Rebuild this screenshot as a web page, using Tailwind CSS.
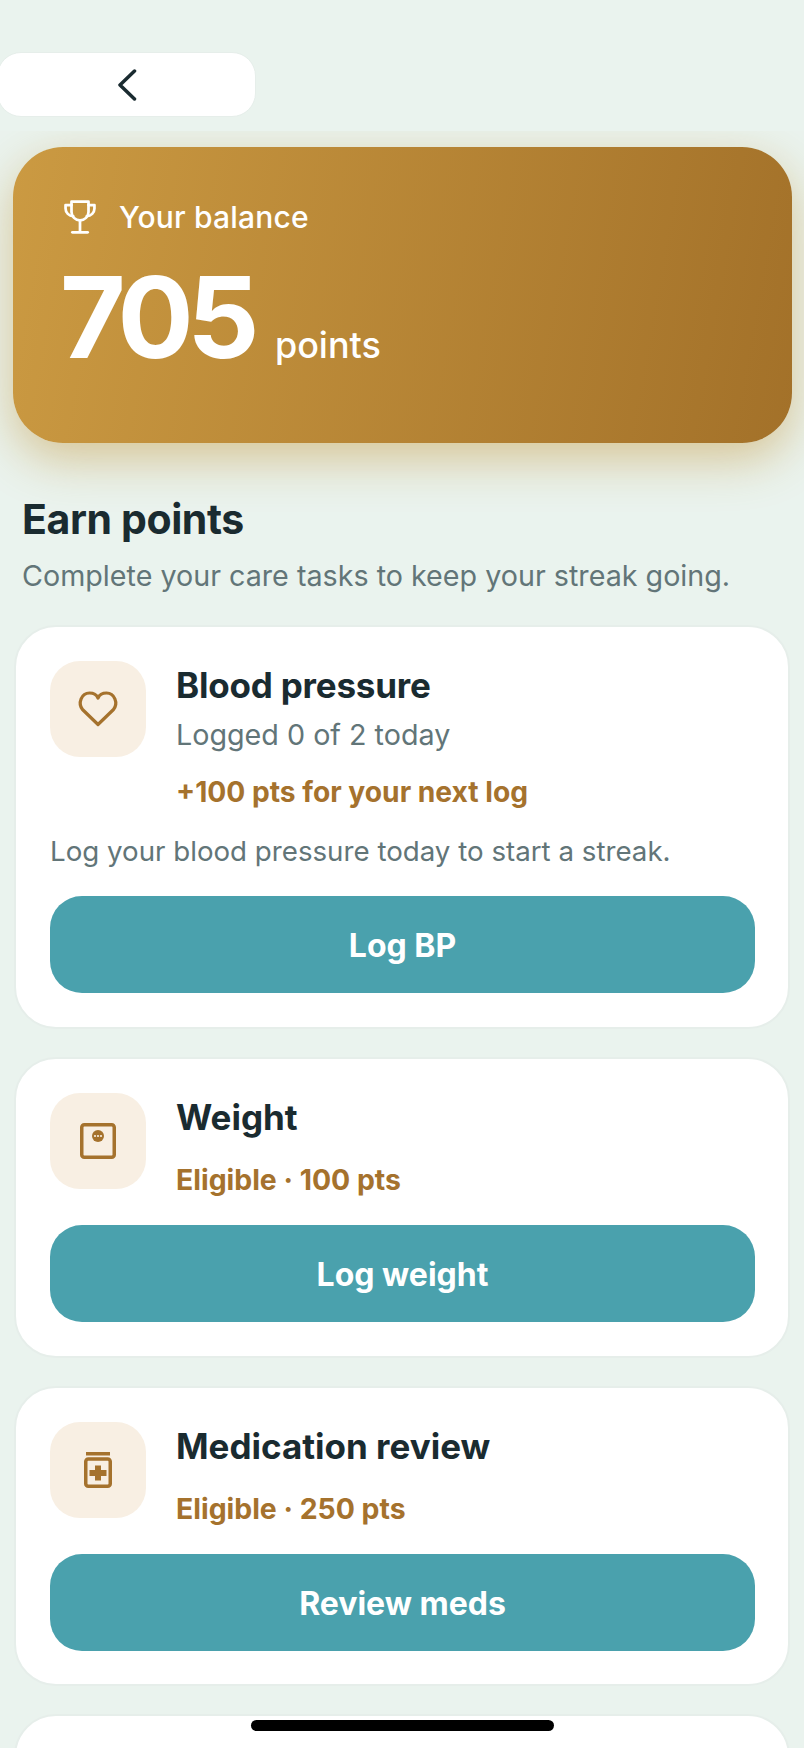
<!DOCTYPE html>
<html lang="en">
<head>
  <meta charset="UTF-8" />
  <meta name="viewport" content="width=device-width, initial-scale=1.0" />
  <title>Rewards</title>
  <script src="https://cdn.jsdelivr.net/npm/@tailwindcss/browser@4"></script>
</head>
<body class="bg-[#eaf3ee] h-[1748px] overflow-hidden relative font-['Inter',sans-serif] text-[#1a2b30]">

  <!-- back button -->
  <div class="h-[131px] pt-[52px]">
    <button class="ml-[-3px] w-[259px] h-[65px] bg-white rounded-[24px] border border-[#e6eeea] flex items-center justify-center">
      <svg width="20" height="32" viewBox="0 0 20 32" fill="none" stroke="#1a2b30" stroke-width="3.5" stroke-linecap="round" stroke-linejoin="round"><path d="M17.5 2 L3 16 L17.5 30"/></svg>
    </button>
  </div>

  <!-- scroll area -->
  <div class="h-[1617px] overflow-hidden">
    <div class="pt-[16px] px-[13px]">
      <div class="h-[296px] w-[779px] rounded-[50px] bg-linear-[100deg,#cb9a42,#a37129] shadow-[0_16px_48px_rgba(190,140,40,0.45)] pt-[52px] pl-[50px] text-white">
        <div class="flex items-center h-[36px]">
          <svg width="34" height="34" viewBox="2.5 2 19 20" fill="none" stroke="white" stroke-width="1.6" stroke-linecap="round" stroke-linejoin="round"><path d="M7 3h10v6a5 5 0 0 1-10 0z"/><path d="M7 5H3.5v2A4.5 4.5 0 0 0 8 11.5"/><path d="M17 5h3.5v2A4.5 4.5 0 0 1 16 11.5"/><path d="M12 14v6"/><path d="M7.5 21h9"/></svg>
          <span class="ml-[22px] text-[30px] font-medium tracking-[0.2px]">Your balance</span>
        </div>
        <div class="flex items-baseline mt-[26px] ml-[-3px]">
          <span class="text-[113px] leading-[112px] font-bold tracking-[-6.5px]">705</span>
          <span class="ml-[22px] text-[36px] font-medium">points</span>
        </div>
      </div>
    </div>

    <div class="px-[22px] mt-[52px]">
      <h2 class="text-[41px] leading-[48px] font-bold tracking-[-0.4px]">Earn points</h2>
      <p class="mt-[14px] text-[28.7px] leading-[38px] text-[#627578]">Complete your care tasks to keep your streak going.</p>
    </div>

    <div class="px-[14px] mt-[30px] flex flex-col gap-[28px]">
      <!-- blood pressure -->
      <div class="h-[404px] bg-white rounded-[42px] border-2 border-[#e6eeea] pt-[34px] pl-[34px] pr-[33px]">
        <div class="flex">
          <div class="w-[96px] h-[96px] rounded-[30px] bg-[#f8efe3] flex items-center justify-center shrink-0">
            <svg width="40" height="36" viewBox="0 0 40 36" fill="none" stroke="#a5722d" stroke-width="3.2" stroke-linejoin="round" class="overflow-visible"><path d="M20 33.5 L4.5 18.5 C-0.5 12 3.5 2 11.5 2 C15 2 18.5 3.5 20 7 C21.5 3.5 25 2 28.5 2 C36.5 2 40.5 12 35.5 18.5 Z"/></svg>
          </div>
          <div class="ml-[30px] pt-[4px]">
            <h3 class="text-[35px] leading-[40px] font-bold tracking-[-0.2px]">Blood pressure</h3>
            <p class="mt-[12px] text-[28.7px] leading-[36px] text-[#627578]">Logged 0 of 2 today</p>
            <p class="mt-[21px] text-[28.2px] leading-[36px] font-bold text-[#a5722d]">+100 pts for your next log</p>
          </div>
        </div>
        <p class="mt-[22px] text-[27.7px] leading-[38px] text-[#627578]">Log your blood pressure today to start a streak.</p>
        <button class="mt-[26px] w-full h-[97px] pt-[3px] rounded-[32px] bg-[#4aa1ad] text-white text-[32px] font-bold">Log BP</button>
      </div>

      <!-- weight -->
      <div class="h-[301px] bg-white rounded-[42px] border-2 border-[#e6eeea] pt-[34px] pl-[34px] pr-[33px]">
        <div class="flex">
          <div class="w-[96px] h-[96px] rounded-[30px] bg-[#f8efe3] flex items-center justify-center shrink-0">
            <svg width="36" height="36" viewBox="0 0 36 36" fill="none"><rect x="1.75" y="1.75" width="32.5" height="32.5" rx="2.5" stroke="#a5722d" stroke-width="3.5"/><circle cx="18" cy="13" r="6" fill="#a5722d"/><circle cx="15" cy="13" r="1.1" fill="#f8efe3"/><circle cx="18" cy="13" r="1.1" fill="#f8efe3"/><circle cx="21" cy="13" r="1.1" fill="#f8efe3"/></svg>
          </div>
          <div class="ml-[30px] pt-[4px]">
            <h3 class="text-[35px] leading-[40px] font-bold">Weight</h3>
            <p class="mt-[25px] text-[28.4px] leading-[36px] font-bold text-[#a5722d]">Eligible · 100 pts</p>
          </div>
        </div>
        <button class="mt-[27px] w-full h-[97px] pt-[3px] rounded-[32px] bg-[#4aa1ad] text-white text-[32px] font-bold">Log weight</button>
      </div>

      <!-- medication review -->
      <div class="h-[300px] bg-white rounded-[42px] border-2 border-[#e6eeea] pt-[34px] pl-[34px] pr-[33px]">
        <div class="flex">
          <div class="w-[96px] h-[96px] rounded-[30px] bg-[#f8efe3] flex items-center justify-center shrink-0">
            <svg width="28" height="36" viewBox="0 0 28 36" fill="none"><rect x="2" y="0" width="24" height="3.5" fill="#a5722d"/><rect x="1.75" y="7" width="24.5" height="27.25" rx="2.5" stroke="#a5722d" stroke-width="3.5"/><path d="M11 13.5h6v4.5h5.5v6H17v4.5h-6V24H5.5v-6H11z" fill="#a5722d"/></svg>
          </div>
          <div class="ml-[30px] pt-[4px]">
            <h3 class="text-[35px] leading-[40px] font-bold">Medication review</h3>
            <p class="mt-[25px] text-[28.4px] leading-[36px] font-bold text-[#a5722d]">Eligible · 250 pts</p>
          </div>
        </div>
        <button class="mt-[27px] w-full h-[97px] pt-[3px] rounded-[32px] bg-[#4aa1ad] text-white text-[32px] font-bold">Review meds</button>
      </div>

      <!-- next card, cut off by the fold -->
      <div class="h-[200px] bg-white rounded-[42px] border-2 border-[#e6eeea]"></div>
    </div>
  </div>

  <!-- home indicator -->
  <div class="absolute left-[251px] top-[1720px] w-[303px] h-[11px] rounded-full bg-black"></div>

</body>
</html>
